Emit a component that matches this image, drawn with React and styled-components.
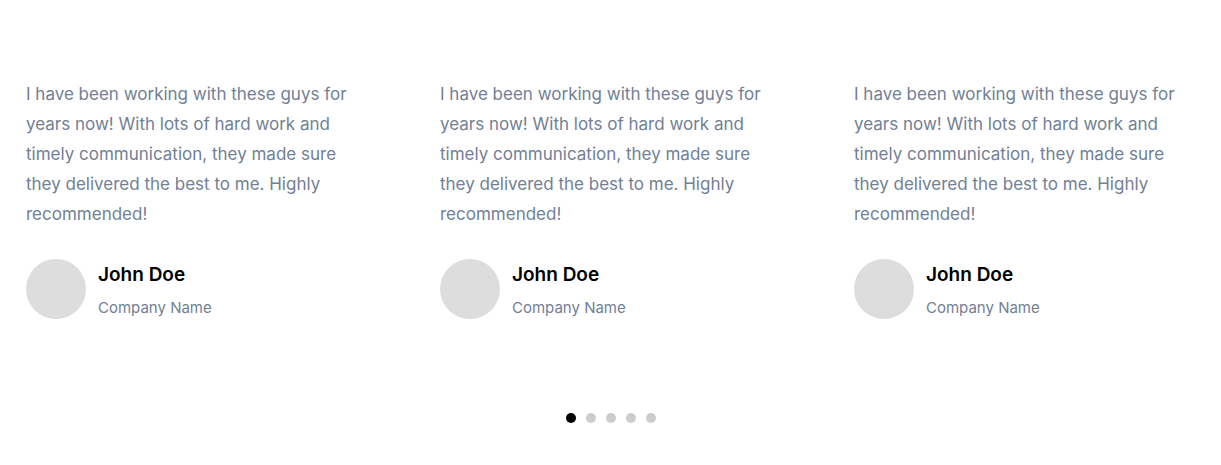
import React from 'react';
import styled, { createGlobalStyle } from 'styled-components';

const GlobalStyle = createGlobalStyle`
  body {
    margin: 0;
    background: #ffffff;
    font-family: 'Inter', 'Noto Sans', sans-serif;
  }
`;

const testimonials = [1, 2, 3].map((id) => ({
  id,
  quote:
    'I have been working with these guys for years now! With lots of hard work and timely communication, they made sure they delivered the best to me. Highly recommended!',
  name: 'John Doe',
  company: 'Company Name',
}));

const App = () => {
  return (
    <>
      <GlobalStyle />
      <Section>
        <Track>
          {testimonials.map((t) => (
            <Slide key={t.id}>
              <Quote>{t.quote}</Quote>
              <Author>
                <Avatar />
                <AuthorInfo>
                  <Name>{t.name}</Name>
                  <Company>{t.company}</Company>
                </AuthorInfo>
              </Author>
            </Slide>
          ))}
        </Track>
        <Dots>
          {[0, 1, 2, 3, 4].map((i) => (
            <Dot key={i} active={i === 0} />
          ))}
        </Dots>
      </Section>
    </>
  );
};

export default App;

const Section = styled.section`
  width: 1221px;
  height: 465px;
  overflow: hidden;
  padding-top: 79px;
  box-sizing: border-box;
`;

const Track = styled.div`
  display: flex;
  padding-left: 26px;
`;

const Slide = styled.div`
  flex: 0 0 414px;
  box-sizing: border-box;
  padding-right: 74px;
`;

const Quote = styled.p`
  margin: 0;
  font-size: 17px;
  line-height: 30px;
  color: #718096;
`;

const Author = styled.div`
  display: flex;
  align-items: center;
  gap: 12px;
  margin-top: 30px;
`;

const Avatar = styled.div`
  width: 60px;
  height: 60px;
  border-radius: 50%;
  background: #dddddd;
  flex-shrink: 0;
`;

const AuthorInfo = styled.div`
  display: flex;
  flex-direction: column;
  padding-top: 2px;
`;

const Name = styled.div`
  font-size: 19px;
  font-weight: 600;
  line-height: 26px;
  color: #000000;
`;

const Company = styled.div`
  font-size: 15px;
  line-height: 20px;
  margin-top: 10px;
  color: #718096;
`;

const Dots = styled.div`
  display: flex;
  justify-content: center;
  gap: 10px;
  margin-top: 94px;
`;

const Dot = styled.span`
  width: 10px;
  height: 10px;
  border-radius: 50%;
  background: ${(props) => (props.active ? '#000000' : '#cccccc')};
`;
